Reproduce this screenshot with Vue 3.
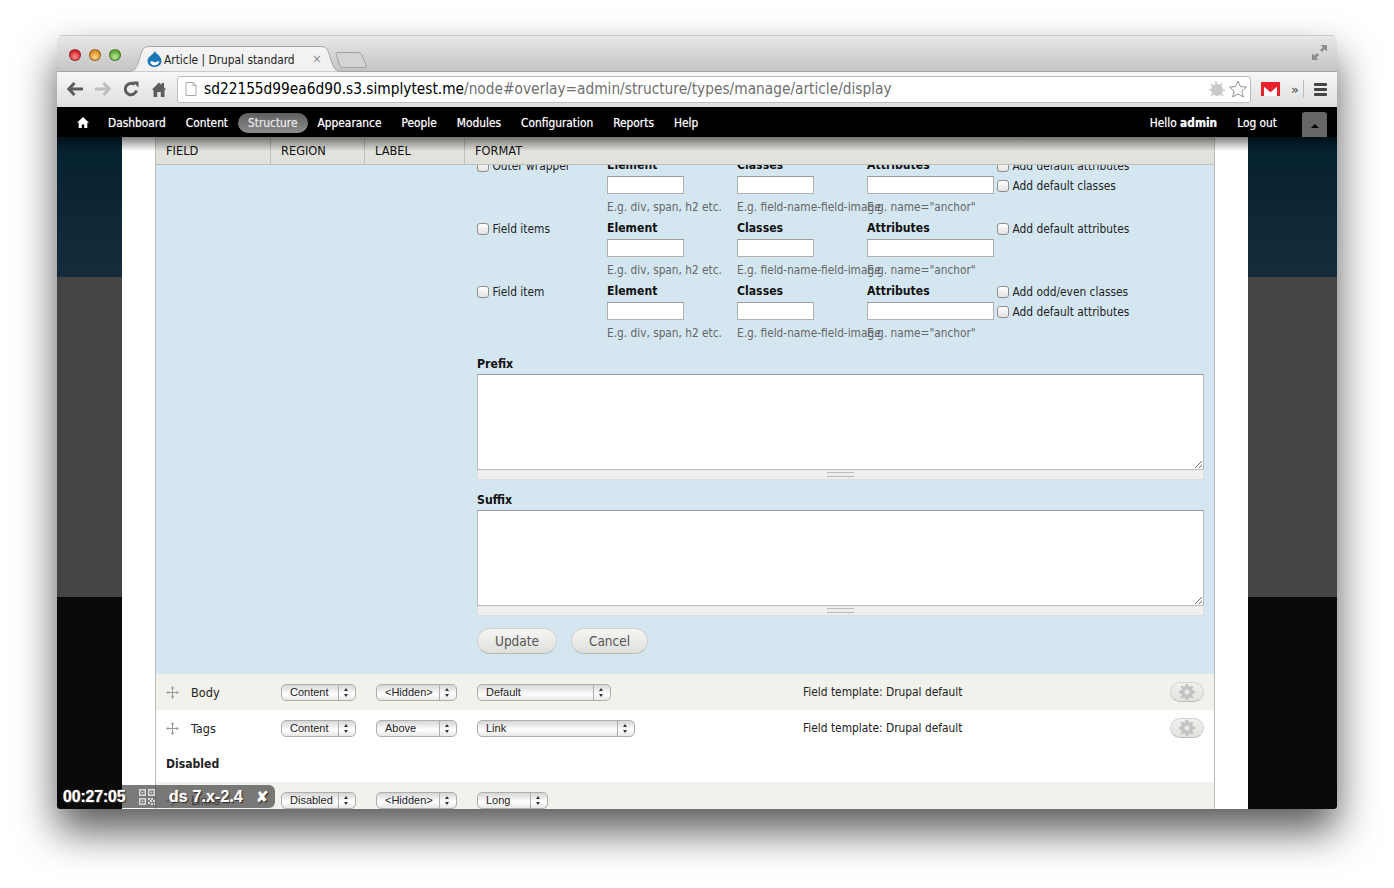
<template>
  <div class="desk">
    <div class="window">
      <div class="tabbar">
        <div class="lights">
          <span class="light red"></span>
          <span class="light amber"></span>
          <span class="light green"></span>
        </div>
        <div class="tab">
          <svg class="tab-shape" width="214" height="26" viewBox="0 0 214 26">
            <path d="M0 25.5 C7 25.5 8 22 10 17 L14 5 C15 2 17 .5 21 .5 L193 .5 C197 .5 199 2 200 5 L204 17 C206 22 207 25.5 214 25.5" fill="url(#tabfill)" stroke="#a9a9a9" />
            <defs>
              <linearGradient id="tabfill" x1="0" y1="0" x2="0" y2="1">
                <stop offset="0" stop-color="#f4f4f4" />
                <stop offset="1" stop-color="#f0f0f0" />
              </linearGradient>
            </defs>
          </svg>
          <svg class="favicon" width="15" height="16" viewBox="0 0 15 16">
            <path d="M8 0 C8.5 2.5 14.5 5 14.5 10 C14.5 13.5 11.5 16 7.5 16 C3.5 16 .5 13.5 .5 10 C.5 5.5 6.5 3.5 8 0 Z" fill="#1b76b8" />
            <path d="M3 11 C5 9 7 11 8 11.5 C10 10.5 11.5 9.5 12.5 11 C11 13.5 9 14.5 7.5 14.5 C5.5 14.5 4 13 3 11 Z" fill="#fff" />
          </svg>
          <span class="tab-title">Article | Drupal standard</span>
          <span class="tab-close">×</span>
        </div>
        <svg class="newtab" width="32" height="16" viewBox="0 0 32 16">
          <path d="M1 1.5 C1 1 1.5 .5 2 .5 L23 .5 C25 .5 26 1.5 27 3 L31 13 C31.5 15 30.5 15.5 29 15.5 L8 15.5 C6 15.5 5 14.5 4.5 13 Z" fill="#d4d4d4" stroke="#a0a0a0" />
        </svg>
        <svg class="fullscreen" width="15" height="15" viewBox="0 0 15 15">
          <path d="M8.5 0 H15 V6.5 L12.7 4.2 L10 7 L8 5 L10.8 2.3 Z M0 8.5 L2.3 10.8 L5 8 L7 10 L4.2 12.7 L6.5 15 H0 Z" fill="#8d8d8d" />
        </svg>
      </div>

      <div class="toolbar">
        <svg class="tool" width="16" height="14" viewBox="0 0 16 14">
          <path d="M7.5 1 L1.8 7 L7.5 13 M2.5 7 H16" fill="none" stroke="#5c5c5c" stroke-width="3" />
        </svg>
        <svg class="tool" width="16" height="14" viewBox="0 0 16 14">
          <path d="M8.5 1 L14.2 7 L8.5 13 M13.5 7 H0" fill="none" stroke="#bdbdbd" stroke-width="3" />
        </svg>
        <svg class="tool reload" width="16" height="16" viewBox="0 0 16 16">
          <path d="M13.5 9.5 A5.7 5.7 0 1 1 11.5 3.6" fill="none" stroke="#5c5c5c" stroke-width="3" />
          <path d="M9.5 .5 L15.5 .5 L15.5 6.5 Z" fill="#5c5c5c" />
        </svg>
        <svg class="tool home" width="14" height="15" viewBox="0 0 14 15">
          <path d="M7 .5 L9.5 3 V1 H12 V5.3 L14 7.5 L12.5 8 V15 H8.8 V10 H5.2 V15 H1.5 V8 L0 7.5 Z" fill="#5c5c5c" />
        </svg>
        <div class="omnibox">
          <svg class="page-icon" width="12" height="14" viewBox="0 0 12 14">
            <path d="M1 .5 H8 L11 3.5 V13.5 H1 Z M8 .5 V3.5 H11" fill="#fff" stroke="#a9a9a9" />
          </svg>
          <span class="url"><b>sd22155d99ea6d90.s3.simplytest.me</b>/node#overlay=admin/structure/types/manage/article/display</span>
          <svg class="bug" width="17" height="17" viewBox="0 0 17 17">
            <circle cx="9" cy="9" r="6" fill="#c9c9c9" />
            <path d="M3 3 L15 15 M14 2 L12 5 M1 9 H4 M14 9 H17 M3 15 L5 13 M8 0 V3" stroke="#c9c9c9" stroke-width="1.6" />
          </svg>
          <svg class="star" width="18" height="18" viewBox="0 0 18 18">
            <path d="M9 1 L11.4 6.6 L17.5 7.1 L12.9 11.1 L14.3 17 L9 13.9 L3.7 17 L5.1 11.1 L.5 7.1 L6.6 6.6 Z" fill="#fff" stroke="#8f8f8f" />
          </svg>
        </div>
        <svg class="gmail" width="19" height="14" viewBox="0 0 19 14">
          <rect width="19" height="14" fill="#e8222c" />
          <path d="M3 14 V3 L9.5 8.5 L16 3 V14 Z" fill="#fff" />
          <path d="M3 3 L9.5 8.5 L16 3" fill="none" stroke="#e8222c" stroke-width="2.6" />
        </svg>
        <span class="chevrons">»</span>
        <span class="divider"></span>
        <div class="menu"><i></i><i></i><i></i></div>
      </div>

      <nav class="adminbar">
        <svg class="nav-home" width="12" height="11" viewBox="0 0 12 11">
          <path d="M6 0 L12 5.7 H10.3 V11 H7.2 V7.5 H4.8 V11 H1.7 V5.7 H0 Z" fill="#fff" />
        </svg>
        <a v-for="item in navItems" :key="item" class="nav-item" :class="{ active: item === 'Structure' }">{{ item }}</a>
        <span class="nav-right">Hello <b>admin</b></span>
        <a class="nav-item logout">Log out</a>
        <div class="bar-toggle"><span></span></div>
      </nav>

      <div class="stage">
        <div class="panel">
          <div class="layout-table">
            <div class="thead">
              <div class="th">FIELD</div>
              <div class="th">REGION</div>
              <div class="th">LABEL</div>
              <div class="th">FORMAT</div>
            </div>

            <div class="settings">
              <div class="wrappers">
                <div v-for="row in wrapperRows" :key="row.name" class="wrapper-row">
                  <label class="check-label"><input type="checkbox" />{{ row.name }}</label>
                  <div v-for="col in wrapperCols" :key="col.title" class="wrapper-col">
                    <div class="col-title">{{ col.title }}</div>
                    <input class="text-input" :class="col.cls" type="text" />
                    <div class="help">{{ col.help }}</div>
                  </div>
                  <div class="wrapper-opts">
                    <label v-for="opt in row.opts" :key="opt" class="check-label"><input type="checkbox" />{{ opt }}</label>
                  </div>
                </div>
              </div>

              <div class="area-block prefix">
                <div class="area-label">Prefix</div>
                <textarea class="area"></textarea>
                <div class="grippie"><span></span></div>
              </div>
              <div class="area-block suffix">
                <div class="area-label">Suffix</div>
                <textarea class="area"></textarea>
                <div class="grippie"><span></span></div>
              </div>

              <div class="actions">
                <button class="btn btn-update">Update</button>
                <button class="btn btn-cancel">Cancel</button>
              </div>
            </div>

            <template v-for="row in fieldRows" :key="row.name">
              <div v-if="row.heading" class="region-title">{{ row.name }}</div>
              <div v-else class="field-row" :class="{ odd: row.odd }">
                <div class="cell-name">
                  <svg class="drag" width="13" height="13" viewBox="0 0 13 13">
                    <path d="M6.5 0 L8.3 2.5 H7 V6 H10.5 V4.7 L13 6.5 L10.5 8.3 V7 H7 V10.5 H8.3 L6.5 13 L4.7 10.5 H6 V7 H2.5 V8.3 L0 6.5 L2.5 4.7 V6 H6 V2.5 H4.7 Z" fill="#9a9a9a" />
                  </svg>
                  <span class="field-name">{{ row.name }}</span>
                </div>
                <div class="select sel-region"><span class="sel-text">{{ row.region }}</span><span class="sel-arrows"></span></div>
                <div class="select sel-label"><span class="sel-text">{{ row.label }}</span><span class="sel-arrows"></span></div>
                <div class="select" :style="{ width: row.formatWidth + 'px' }"><span class="sel-text">{{ row.format }}</span><span class="sel-arrows"></span></div>
                <span class="summary">{{ row.summary }}</span>
                <button v-if="row.summary" class="gear-btn">
                  <svg width="16" height="16" viewBox="0 0 16 16">
                    <path d="M6.7 0 H9.3 L9.7 2.2 L11.2 2.8 L13 1.5 L14.5 3 L13.2 4.8 L13.8 6.3 L16 6.7 V9.3 L13.8 9.7 L13.2 11.2 L14.5 13 L13 14.5 L11.2 13.2 L9.7 13.8 L9.3 16 H6.7 L6.3 13.8 L4.8 13.2 L3 14.5 L1.5 13 L2.8 11.2 L2.2 9.7 L0 9.3 V6.7 L2.2 6.3 L2.8 4.8 L1.5 3 L3 1.5 L4.8 2.8 L6.3 2.2 Z M8 5.5 A2.5 2.5 0 1 0 8 10.5 A2.5 2.5 0 1 0 8 5.5 Z" fill="#c4c4c4" fill-rule="evenodd" />
                  </svg>
                </button>
              </div>
            </template>
          </div>
        </div>

        <div class="recorder">
          <span class="clock">00:27:05</span>
          <div class="rec-info">
            <svg class="qr" width="16" height="16" viewBox="0 0 16 16">
              <path d="M0 0 H7 V7 H0 Z M1.5 1.5 V5.5 H5.5 V1.5 Z M9 0 H16 V7 H9 Z M10.5 1.5 V5.5 H14.5 V1.5 Z M0 9 H7 V16 H0 Z M1.5 10.5 V14.5 H5.5 V10.5 Z" fill="#d8d8d8" fill-rule="evenodd" />
              <path d="M2.7 2.7 H4.3 V4.3 H2.7 Z M11.7 2.7 H13.3 V4.3 H11.7 Z M2.7 11.7 H4.3 V13.3 H2.7 Z M9 9 H11 V11 H9 Z M12 9 H14 V11 H12 Z M14 11 H16 V13 H14 Z M11 11 H13 V13 H11 Z M9 13 H11 V15 H9 Z M12 14 H14 V16 H12 Z M15 14 H16 V16 H15 Z" fill="#d8d8d8" />
            </svg>
            <span class="rec-name">ds 7.x-2.4</span>
            <span class="rec-close">✘</span>
          </div>
        </div>
      </div>
    </div>
  </div>
</template>

<script setup>
const navItems = ['Dashboard', 'Content', 'Structure', 'Appearance', 'People', 'Modules', 'Configuration', 'Reports', 'Help']

const wrapperCols = [
  { title: 'Element', help: 'E.g. div, span, h2 etc.', cls: 'short' },
  { title: 'Classes', help: 'E.g. field-name-field-image', cls: 'short' },
  { title: 'Attributes', help: 'E.g. name="anchor"', cls: 'long' }
]

const wrapperRows = [
  { name: 'Outer wrapper', opts: ['Add default attributes', 'Add default classes'] },
  { name: 'Field items', opts: ['Add default attributes'] },
  { name: 'Field item', opts: ['Add odd/even classes', 'Add default attributes'] }
]

const fieldRows = [
  { name: 'Body', region: 'Content', label: '<Hidden>', format: 'Default', formatWidth: 134, summary: 'Field template: Drupal default', odd: true },
  { name: 'Tags', region: 'Content', label: 'Above', format: 'Link', formatWidth: 158, summary: 'Field template: Drupal default' },
  { name: 'Disabled', heading: true },
  { name: 'Links', region: 'Disabled', label: '<Hidden>', format: 'Long', formatWidth: 71, odd: true }
]
</script>

<style>
html, body {
  margin: 0;
  background: #fff;
}
</style>

<style scoped>
.desk {
  height: 888px;
  box-sizing: border-box;
  padding: 35px 0 0 57px;
  overflow: hidden;
}
.window {
  position: relative;
  display: flex;
  flex-direction: column;
  width: 1280px;
  height: 774px;
  border-radius: 5px 5px 3px 3px;
  overflow: hidden;
  box-shadow: 0 22px 40px rgba(0, 0, 0, 0.65);
  font-family: "DejaVu Sans Condensed", "DejaVu Sans", sans-serif;
  font-size: 12px;
  color: #000;
}

/* browser chrome */
.tabbar {
  position: relative;
  display: flex;
  align-items: flex-start;
  flex: 0 0 36px;
  min-height: 0;
  box-sizing: border-box;
  background: linear-gradient(#e8e8e8, #c4c4c4);
  border-top: 1px solid #c9c9c9;
}
.lights {
  display: flex;
  gap: 8px;
  padding: 13px 0 0 12px;
}
.light {
  width: 12px;
  height: 12px;
  border-radius: 50%;
  border: 1px solid rgba(0, 0, 0, 0.35);
  box-sizing: border-box;
}
.red { background: radial-gradient(circle at 50% 70%, #ff8d8d, #d4262e 70%); }
.amber { background: radial-gradient(circle at 50% 70%, #ffd888, #d98a20 70%); }
.green { background: radial-gradient(circle at 50% 70%, #b9e89a, #5ba832 70%); }
.tab {
  position: relative;
  z-index: 1;
  display: flex;
  align-items: center;
  width: 206px;
  height: 26px;
  margin: 10px 0 0 9px;
  box-sizing: border-box;
  padding: 1px 0 0 34px;
}
.tab-shape {
  position: absolute;
  left: -2px;
  top: 0;
}
.favicon {
  position: absolute;
  left: 17px;
  top: 5px;
}
.tab-title {
  position: relative;
  font-size: 11.83px;
  color: #222;
  white-space: nowrap;
}
.tab-close {
  position: absolute;
  left: 182px;
  top: 5px;
  font-size: 13px;
  color: #8b8b8b;
}
.newtab {
  margin: 16px 0 0 -1px;
}
.fullscreen {
  position: absolute;
  right: 10px;
  top: 9px;
}
.toolbar {
  display: flex;
  align-items: center;
  flex: 0 0 36px;
  min-height: 0;
  box-sizing: border-box;
  background: linear-gradient(#f7f7f7, #dedede);
  border-top: 1px solid #a3a3a3;
  padding: 0 0 1px 10px;
}
.tool {
  margin-right: 12px;
  flex: none;
}
.tool.reload {
  margin-right: 13px;
}
.tool.home {
  margin-right: 11px;
}
.omnibox {
  display: flex;
  align-items: center;
  flex: none;
  width: 1074px;
  height: 27px;
  box-sizing: border-box;
  background: #fff;
  border: 1px solid #bdbdbd;
  border-radius: 3px;
  padding-left: 7px;
}
.page-icon {
  flex: none;
}
.url {
  margin-left: 7px;
  font-size: 15.29px;
  color: #6f6f6f;
  white-space: nowrap;
  flex: 1;
}
.url b {
  font-weight: normal;
  color: #000;
}
.bug {
  flex: none;
  margin-right: 4px;
}
.star {
  flex: none;
  margin-right: 3px;
}
.gmail {
  margin-left: 10px;
  flex: none;
}
.chevrons {
  margin-left: 11px;
  font-family: "DejaVu Sans", sans-serif;
  font-size: 13px;
  color: #444;
}
.divider {
  width: 1px;
  height: 18px;
  margin-left: 4px;
  background: #bbb;
}
.menu {
  display: flex;
  flex-direction: column;
  gap: 2px;
  margin-left: 10px;
}
.menu i {
  display: block;
  width: 13px;
  height: 3px;
  border-radius: 1px;
  background: #444;
}

/* admin toolbar */
.adminbar {
  display: flex;
  align-items: center;
  flex: 0 0 30px;
  min-height: 0;
  box-sizing: border-box;
  padding: 1px 0 0 20px;
  background: #000;
  color: #fff;
  font-size: 11.83px;
  text-shadow: 0 0 1px rgba(255, 255, 255, 0.6);
}
.nav-home {
  margin-right: 9px;
}
.nav-item {
  padding: 3px 10px;
  line-height: 14px;
  border-radius: 10px;
  color: #fff;
  white-space: nowrap;
}
.nav-item.active {
  background: linear-gradient(#5f5f5f, #8c8c8c);
  color: #e6e6e6;
}
.nav-right {
  margin-left: auto;
  white-space: nowrap;
}
.nav-right b {
  font-weight: bold;
}
.logout {
  margin-left: 10px;
}
.bar-toggle {
  display: flex;
  align-items: center;
  justify-content: center;
  align-self: flex-end;
  width: 25px;
  height: 25px;
  margin: 0 10px 0 15px;
  background: #666;
  border-radius: 3px 3px 0 0;
}
.bar-toggle span {
  width: 0;
  height: 0;
  margin-top: 3px;
  border: 4px solid transparent;
  border-top: 0;
  border-bottom: 4px solid #000;
}

/* page behind the overlay */
.stage {
  position: relative;
  flex: 1;
  min-height: 0;
  overflow: hidden;
  background: linear-gradient(#04202f 0, #162c3c 140px, #444 140px, #444 460px, #0a0a0a 460px);
}
.stage::before {
  content: "";
  position: absolute;
  left: 0;
  right: 0;
  top: 0;
  height: 14px;
  background: linear-gradient(rgba(0, 0, 0, 0.5), rgba(0, 0, 0, 0));
  z-index: 2;
  pointer-events: none;
}
.panel {
  width: 1060px;
  height: 100%;
  margin-left: 65px;
  padding: 0 33px;
  background: #fff;
}
.layout-table {
  height: 100%;
  box-sizing: border-box;
  border-left: 1px solid #bebfb9;
  border-right: 1px solid #bebfb9;
  overflow: hidden;
}
.thead {
  display: grid;
  grid-template-columns: 114px 94px 100px 1fr;
  height: 28px;
  box-sizing: border-box;
  background: #e1e2dc;
  border-bottom: 1px solid #bebfb9;
}
.th {
  display: flex;
  align-items: flex-end;
  padding: 0 0 6px 10px;
  font-size: 12.7px;
  line-height: 14px;
  color: #111;
}
.th + .th {
  border-left: 1px solid #bebfb9;
}

/* open settings row */
.settings {
  height: 509px;
  overflow: hidden;
  background: #d4e7f1;
  padding-left: 321px;
  box-sizing: border-box;
  padding-right: 10px;
}
.wrappers {
  margin-top: -11px;
}
.wrapper-row {
  display: grid;
  grid-template-columns: 130px 130px 130px 130px 1fr;
  height: 63px;
}
.check-label {
  display: flex;
  align-items: center;
  height: 14px;
  font-size: 11.83px;
  line-height: 14px;
  color: #222;
  white-space: nowrap;
}
.check-label input {
  appearance: none;
  width: 12px;
  height: 12px;
  margin: 0 3.5px 0 0;
  border: 1px solid #8e8e8e;
  border-radius: 3px;
  background: linear-gradient(#fff, #e2e2e2);
  box-sizing: border-box;
}
.wrapper-col {
  position: relative;
}
.wrapper-row > .check-label,
.wrapper-opts {
  margin-top: 5px;
}
.wrapper-opts {
  display: flex;
  flex-direction: column;
  gap: 6px;
}
.col-title {
  height: 14px;
  margin-top: 4px;
  font-size: 12.15px;
  line-height: 14px;
  font-weight: bold;
  color: #111;
}
.text-input {
  display: block;
  height: 18px;
  margin-top: 4px;
  box-sizing: border-box;
  background: #fff;
  border: 1px solid #b0b0b0;
  border-top-color: #9c9c9c;
  padding: 0;
  outline: none;
}
.text-input.short {
  width: 77px;
}
.text-input.long {
  width: 127px;
}
.help {
  margin-top: 6px;
  font-size: 11.78px;
  line-height: 14px;
  color: #666;
  white-space: nowrap;
}
.area-block {
  width: 727px;
}
.area-block.prefix {
  margin-top: 14px;
}
.area-block.suffix {
  margin-top: 13px;
}
.area-label {
  font-size: 12.2px;
  line-height: 14px;
  font-weight: bold;
  color: #111;
  margin-bottom: 3px;
}
.area {
  display: block;
  width: 100%;
  height: 96px;
  box-sizing: border-box;
  resize: vertical;
  background: #fff;
  border: 1px solid #bbb;
  border-top-color: #999;
  outline: none;
  padding: 0;
  margin: 0;
}
.grippie {
  display: flex;
  align-items: center;
  justify-content: center;
  height: 9px;
  background: #eee;
  border: 1px solid #ddd;
  border-top: 0;
}
.grippie span {
  width: 27px;
  height: 3px;
  border-top: 1px solid #bbb;
  border-bottom: 1px solid #bbb;
}
.actions {
  display: flex;
  gap: 14px;
  margin-top: 12px;
}
.btn {
  height: 26px;
  box-sizing: border-box;
  padding: 0;
  font-family: inherit;
  font-size: 13.5px;
  color: #555;
  background: linear-gradient(#f6f6f4, #dfdfdc);
  border: 1px solid #d0d0cc;
  border-bottom-color: #b9b9b4;
  border-radius: 13px;
}
.btn-update {
  width: 80px;
}
.btn-cancel {
  width: 77px;
}

/* field rows */
.field-row {
  display: grid;
  grid-template-columns: 125px 95px 101px 326px 1fr 34px;
  align-items: center;
  height: 36px;
  padding-right: 10px;
  box-sizing: border-box;
  background: #fff;
}
.field-row.odd {
  background: #f2f2ec;
}
.cell-name {
  display: flex;
  align-items: center;
}
.drag {
  margin-left: 10px;
  flex: none;
}
.field-name {
  margin-left: 12px;
  font-size: 12.6px;
  color: #222;
  white-space: nowrap;
}
.select {
  display: flex;
  align-items: center;
  height: 17px;
  box-sizing: border-box;
  border: 1px solid #aeaeae;
  border-radius: 5px;
  background: linear-gradient(#d6d6d6, #fff 60%, #e6e6e6);
  font-family: "Liberation Sans", sans-serif;
  font-size: 11px;
  color: #222;
}
.sel-text {
  flex: 1;
  padding-left: 8px;
  white-space: nowrap;
}
.sel-arrows {
  position: relative;
  flex: none;
  width: 16px;
  height: 100%;
  border-left: 1px solid #aeaeae;
}
.sel-arrows::before,
.sel-arrows::after {
  content: "";
  position: absolute;
  left: 5px;
  border: 2.5px solid transparent;
}
.sel-arrows::before {
  top: 3px;
  border-top: 0;
  border-bottom: 3.5px solid #333;
}
.sel-arrows::after {
  bottom: 3px;
  border-bottom: 0;
  border-top: 3.5px solid #333;
}
.sel-region {
  width: 75px;
}
.sel-label {
  width: 81px;
}
.summary {
  font-size: 11.85px;
  color: #222;
  white-space: nowrap;
}
.gear-btn {
  display: flex;
  align-items: center;
  justify-content: center;
  width: 34px;
  height: 20px;
  padding: 0;
  background: linear-gradient(#f0f0ee, #e2e2df);
  border: 1px solid #d4d4d0;
  border-bottom-color: #bcbcb8;
  border-radius: 10px;
}
.region-title {
  display: flex;
  align-items: center;
  height: 36px;
  padding-left: 10px;
  font-size: 12.1px;
  font-weight: bold;
  color: #222;
}

/* screen recorder badge */
.recorder {
  position: absolute;
  left: 0;
  bottom: 1px;
  display: flex;
  align-items: center;
  height: 23px;
  font-family: "Liberation Sans", sans-serif;
  font-weight: bold;
  color: #fff;
  z-index: 3;
}
.clock {
  position: relative;
  z-index: 1;
  width: 65px;
  box-sizing: border-box;
  padding-left: 6px;
  font-size: 16px;
  letter-spacing: -0.2px;
  text-shadow: 1px 1px 1px #333, 0 0 1px #fff;
  white-space: nowrap;
}
.rec-info {
  display: flex;
  align-items: center;
  width: 153px;
  height: 23px;
  box-sizing: border-box;
  padding-left: 17px;
  background: rgba(70, 70, 70, 0.72);
  border-radius: 0 6px 6px 0;
}
.rec-name {
  margin-left: 14px;
  font-size: 16px;
  letter-spacing: 0.1px;
  text-shadow: 1px 1px 1px #222, 0 0 1px #fff;
  white-space: nowrap;
}
.rec-close {
  margin-left: 13px;
  font-size: 15px;
  text-shadow: 1px 1px 1px #222;
}
</style>
